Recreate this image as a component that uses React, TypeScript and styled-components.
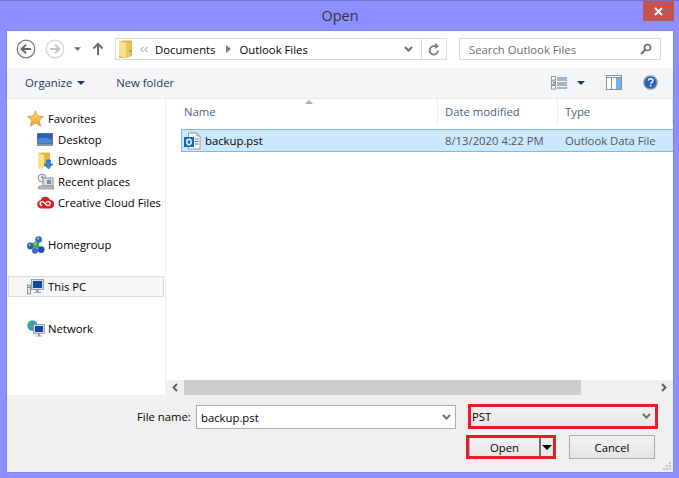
import React from 'react';
import styled, { createGlobalStyle } from 'styled-components';

const GlobalStyle = createGlobalStyle`
  html, body {
    margin: 0;
    padding: 0;
    background: #8c8fff;
  }
  * {
    box-sizing: border-box;
  }
`;

const UI_FONT = `"Open Sans", "Noto Sans", sans-serif`;

const Window = styled.div`
  background: #8c8fff;
  border-top: 1px solid #7070d0;
  color: #000;
  display: flex;
  flex-direction: column;
  font-family: ${UI_FONT};
  font-size: 11.3px;
  height: 478px;
  overflow: hidden;
  width: 679px;
`;

const TitleBar = styled.div`
  align-items: center;
  color: #333;
  display: flex;
  flex: 0 0 30px;
  font-size: 14.5px;
  justify-content: center;
  padding: 0 0 2px 1px;
  position: relative;
`;

const CloseButton = styled.div`
  align-items: center;
  background: #c75050;
  display: flex;
  height: 20px;
  justify-content: center;
  position: absolute;
  right: 5px;
  top: 0;
  width: 31px;
`;

const Content = styled.div`
  background: #fff;
  box-shadow: 0 0 0 1px #8082ea;
  display: flex;
  flex-direction: column;
  height: 441px;
  margin-left: 7px;
  width: 666px;
`;

const Toolbar = styled.div`
  align-items: center;
  display: flex;
  flex: 0 0 37px;
  padding: 0 12px 1px 9px;
`;

const NavIcons = styled.div`
  align-items: center;
  display: flex;
  flex: 0 0 99px;
`;

const AddressBar = styled.div`
  align-items: center;
  border: 1px solid #d9d9d9;
  display: flex;
  height: 22px;
  width: 332px;
`;

const FolderSlot = styled.div`
  align-items: center;
  display: flex;
  padding-left: 3px;
  width: 24px;
`;

const Crumbs = styled.div`
  align-items: center;
  display: flex;
  flex: 1;
  gap: 7px;
`;

const CrumbArrow = styled.svg`
  margin: 0 1px 0 4px;
`;

const AddressEnd = styled.div<{ $width: number }>`
  align-items: center;
  border-left: 1px solid #d9d9d9;
  display: flex;
  height: 100%;
  justify-content: center;
  width: ${(props) => props.$width}px;
`;

const AddressChevron = styled.div`
  align-items: center;
  display: flex;
  height: 100%;
  justify-content: center;
  width: 25px;
`;

const SearchBox = styled.div`
  align-items: center;
  border: 1px solid #d9d9d9;
  color: #6d6d6d;
  display: flex;
  height: 22px;
  justify-content: space-between;
  margin-left: 12px;
  padding: 0 8px 0 9px;
  width: 202px;
`;

const CommandBar = styled.div`
  align-items: center;
  background: #f4f5f7;
  border-bottom: 1px solid #e8e9eb;
  color: #1e395b;
  display: flex;
  flex: 0 0 31px;
  justify-content: space-between;
  padding: 0 15px 1px 18px;
`;

const CommandGroup = styled.div<{ $gap: number }>`
  align-items: center;
  display: flex;
  gap: ${(props) => props.$gap}px;
`;

const Organize = styled.div`
  align-items: center;
  display: flex;
  gap: 5px;
`;

const Main = styled.div`
  display: flex;
  flex: 0 0 296px;
`;

const Sidebar = styled.div`
  border-right: 1px solid #f0f0f0;
  display: flex;
  flex: 0 0 159px;
  flex-direction: column;
  padding: 9px 0 0 1px;
`;

const NavGroup = styled.div`
  display: flex;
  flex-direction: column;
  margin-bottom: 21px;
`;

const NavItem = styled.div<{ $child?: boolean; $selected?: boolean }>`
  align-items: center;
  background: ${(props) => (props.$selected ? '#f6f6f6' : 'transparent')};
  border: 1px solid ${(props) => (props.$selected ? '#dcdcdc' : 'transparent')};
  display: flex;
  gap: 3px;
  height: 21px;
  padding-left: ${(props) => (props.$child ? 28 : 18)}px;
  white-space: nowrap;
  width: 156px;
`;

const NavIcon = styled.span`
  display: inline-flex;
  flex: 0 0 18px;
`;

const ListPane = styled.div`
  display: flex;
  flex: 1;
  flex-direction: column;
  min-width: 0;
`;

const ListBody = styled.div`
  flex: 1;
  overflow: hidden;
`;

const ColumnHeader = styled.div`
  color: #4c607a;
  display: flex;
  height: 26px;
  position: relative;
`;

const Column = styled.div<{ $width: number; $first?: boolean }>`
  align-items: center;
  border-right: 1px solid #ececec;
  display: flex;
  flex: 0 0 ${(props) => props.$width}px;
  height: 100%;
  padding: 0 0 2px ${(props) => (props.$first ? 18 : 7)}px;
`;

const SortArrow = styled.div`
  display: flex;
  left: 139px;
  position: absolute;
  top: 1px;
`;

const FileRow = styled.div`
  align-items: center;
  background: #cce8ff;
  border: 1px solid #7fb8e8;
  border-right: 0;
  display: flex;
  height: 23px;
  margin: 4px 0 0 15px;
`;

const NameCell = styled.div`
  align-items: center;
  display: flex;
  flex: 0 0 258px;
  gap: 3px;
  padding-left: 2px;
`;

const DateCell = styled.div`
  color: #555;
  flex: 0 0 125px;
  padding-left: 5px;
  white-space: nowrap;
`;

const TypeCell = styled.div`
  color: #555;
  white-space: nowrap;
`;

const Scrollbar = styled.div`
  align-items: center;
  background: #f0f0f0;
  display: flex;
  flex: 0 0 15px;
`;

const ScrollArrow = styled.div`
  align-items: center;
  display: flex;
  flex: 0 0 18px;
  height: 100%;
  justify-content: center;
`;

const ScrollTrack = styled.div`
  flex: 1;
  height: 100%;
`;

const ScrollThumb = styled.div`
  background: #cdcdcd;
  height: 100%;
`;

const Footer = styled.div`
  background: #f0f0f0;
  display: flex;
  flex: 0 0 77px;
  flex-direction: column;
  padding-top: 9px;
  position: relative;
`;

const FieldRow = styled.div`
  align-items: flex-end;
  display: flex;
`;

const ButtonRow = styled.div`
  align-items: flex-start;
  display: flex;
  margin-top: 6px;
`;

const FileNameLabel = styled.label`
  align-self: center;
  margin-left: 130px;
  width: 59px;
`;

const FileNameInput = styled.div`
  align-items: center;
  background: #fff;
  border: 1px solid #ababab;
  display: flex;
  height: 24px;
  justify-content: space-between;
  padding: 0 4px 0 4px;
  width: 260px;
`;

const FilterSelect = styled.div`
  align-items: center;
  background: linear-gradient(#f2f2f2, #e5e5e5);
  border: 3px solid #ed1c24;
  display: flex;
  height: 25px;
  justify-content: space-between;
  margin-left: 12px;
  padding: 0 4px 0 1px;
  width: 190px;
`;

const OpenFrame = styled.div`
  background: linear-gradient(#f2f2f2, #e5e5e5);
  border: 3px solid #ed1c24;
  display: flex;
  height: 24px;
  margin-left: 459px;
  width: 90px;
`;

const OpenLabel = styled.div`
  align-items: center;
  border-left: 1px solid #8fb8e0;
  border-right: 2px solid #707070;
  display: flex;
  flex: 1;
  justify-content: center;
`;

const OpenSplit = styled.div`
  align-items: center;
  display: flex;
  flex: 0 0 12px;
  justify-content: center;
`;

const CancelButton = styled.div`
  align-items: center;
  background: linear-gradient(#f2f2f2, #e5e5e5);
  border: 1px solid #acacac;
  display: flex;
  height: 24px;
  justify-content: center;
  margin-left: 13px;
  width: 86px;
`;

const ResizeGrip = styled.svg`
  bottom: 1px;
  position: absolute;
  right: 1px;
`;

const NavCircle = ({ disabled, flip }: { disabled?: boolean; flip?: boolean }) => {
  const color = disabled ? '#d4d4d4' : '#7d7d7d';
  const arrow = disabled ? '#c4c4c4' : '#6a6a6a';
  return (
    <svg width="20" height="20" viewBox="0 0 20 20" style={{ marginRight: 9 }}>
      <circle cx="10" cy="10" r="8.8" fill="#fff" stroke={color} strokeWidth="1.2" />
      <path
        d={flip ? 'M5 10h9M10 5.8l4.4 4.2-4.4 4.2' : 'M15 10H6M10 5.8L5.6 10l4.4 4.2'}
        fill="none"
        stroke={arrow}
        strokeWidth="2"
      />
    </svg>
  );
};

const Caret = ({ color = '#6d6d6d', width = 7 }: { color?: string; width?: number }) => (
  <svg width={width} height={Math.ceil(width / 2)} viewBox="0 0 8 4">
    <path d="M0 0h8L4 4z" fill={color} />
  </svg>
);

const Chevron = ({ color = '#6d6d6d' }: { color?: string }) => (
  <svg width="9" height="7" viewBox="0 0 9 7">
    <path d="M1 1l3.5 3.6L8 1" fill="none" stroke={color} strokeWidth="2" />
  </svg>
);

const FolderIcon = () => (
  <svg width="13" height="18" viewBox="0 0 13 18">
    <path d="M0 1l6-.5h6l1 1V16l-7 2H0z" fill="#e2b544" />
    <path d="M0 1l7 2v15l-7-2z" fill="#f8e28e" />
    <path d="M7 3h5v13H7z" fill="#ecc65c" />
    <rect x="10.5" y="10" width="1.5" height="2" fill="#5a9bd8" />
  </svg>
);

const StarIcon = () => (
  <svg width="17" height="17" viewBox="0 0 17 17">
    <defs>
      <linearGradient id="star" x1="0" y1="0" x2="0" y2="1">
        <stop offset="0" stopColor="#ffe27a" />
        <stop offset="1" stopColor="#f79a2c" />
      </linearGradient>
    </defs>
    <path
      d="M8.5.8l2.3 5.3 5.6.5-4.2 3.7 1.3 5.7-5-3-5 3 1.3-5.7L.6 6.6l5.6-.5z"
      fill="url(#star)"
      stroke="#d98b3a"
      strokeWidth="0.8"
    />
  </svg>
);

const DesktopIcon = () => (
  <svg width="16" height="13" viewBox="0 0 16 13">
    <rect x="0.5" y="0.5" width="15" height="10" fill="#2a62bb" stroke="#5b7390" />
    <path d="M1 6q7-3 14 1v3H1z" fill="#4a8ad8" />
    <rect x="0" y="11" width="16" height="2" fill="#8a97a8" />
  </svg>
);

const DownloadsIcon = () => (
  <svg width="18" height="18" viewBox="0 0 18 18">
    <path d="M1 1l5-.5h6l1 1V15H6l-5 2z" fill="#e2b544" />
    <path d="M1 1l6 2v13l-6 1z" fill="#f8e28e" />
    <path d="M9.5 8h4v4H16l-4.5 5L7 12h2.5z" fill="#2a8be0" stroke="#1a66b0" strokeWidth="0.6" />
  </svg>
);

const RecentIcon = () => (
  <svg width="18" height="18" viewBox="0 0 18 18">
    <circle cx="5" cy="5" r="4" fill="#eef1f4" stroke="#8b8b8b" />
    <path d="M5 2.5V5h2" fill="none" stroke="#555" />
    <rect x="6" y="5" width="10" height="8" fill="#d8dde2" stroke="#8b8f94" />
    <rect x="10" y="7" width="4" height="4" fill="#5b8fd0" />
    <path d="M2 13h14l1 3H1z" fill="#b6bbc0" stroke="#7b7f84" strokeWidth="0.6" />
  </svg>
);

const CreativeCloudIcon = () => (
  <svg width="17" height="15" viewBox="0 0 17 15">
    <path
      d="M4.2 13.5a4.2 4.2 0 0 1-.6-8.3 5 5 0 0 1 9.4-.5 4.4 4.4 0 0 1-.3 8.8z"
      fill="#da1f26"
    />
    <path
      d="M5.2 10.6a2 2 0 0 1 0-4c2 0 3.6 4 5.8 4a2 2 0 0 0 .4-4c-1-.1-1.8.5-2.5 1.2"
      fill="none"
      stroke="#fff"
      strokeWidth="1.4"
    />
  </svg>
);

const HomegroupIcon = () => (
  <svg width="18" height="18" viewBox="0 0 18 18">
    <path d="M9 9L3.5 10M9 9l3-5.5M9 9l5 4.5M9 9l-1.5 6" stroke="#6c96d2" strokeWidth="2.4" />
    <circle cx="3.4" cy="10" r="3.4" fill="#2c5fb8" />
    <circle cx="11.6" cy="3.6" r="3.4" fill="#3668c0" />
    <circle cx="14.2" cy="13.6" r="3.4" fill="#2450a8" />
    <circle cx="8" cy="14.8" r="3" fill="#3a6cc6" />
    <circle cx="9" cy="9" r="3.2" fill="#43a648" />
    <circle cx="11" cy="2.6" r="1.1" fill="#9dbbe8" />
    <circle cx="2.6" cy="9" r="1.1" fill="#9dbbe8" />
    <circle cx="8.4" cy="8" r="1.1" fill="#a8dca8" />
  </svg>
);

const ThisPcIcon = () => (
  <svg width="17" height="16" viewBox="0 0 17 16">
    <rect x="0.5" y="6" width="3" height="9" fill="#e2e4e6" stroke="#7d8288" strokeWidth="0.8" />
    <rect x="1" y="8" width="2" height="1" fill="#43a648" />
    <rect x="4.5" y="0.5" width="12" height="10" fill="#d5dbe2" stroke="#7d8a98" strokeWidth="0.8" />
    <rect x="6" y="2" width="9" height="7" fill="#1446a8" />
    <path d="M9 11h3v2h2v1H7v-1h2z" fill="#9aa2aa" />
  </svg>
);

const NetworkIcon = () => (
  <svg width="18" height="18" viewBox="0 0 18 18">
    <circle cx="5.5" cy="5.5" r="5.2" fill="#2f9adf" />
    <path d="M1.5 2.5q3-2.2 5.5 0t-2 3-1 4q-3.5-2-2.5-7z" fill="#3fae4f" />
    <rect x="6.5" y="4.5" width="11" height="9" fill="#d5dbe2" stroke="#7d8a98" strokeWidth="0.7" />
    <rect x="8" y="6" width="8" height="6" fill="#1446a8" />
    <path d="M11 13.5h2v2h2v1H9v-1h2z" fill="#9aa2aa" />
  </svg>
);

const OutlookIcon = () => (
  <svg width="18" height="18" viewBox="0 0 18 18">
    <path d="M4.5 1H13l3 3v13H4.5z" fill="#fff" stroke="#8d99a6" />
    <path d="M13 1v3h3" fill="#e4e8ec" stroke="#8d99a6" />
    <path d="M11 7h3.5M11 9.5h3.5M11 12h3.5" stroke="#2272c9" />
    <rect x="0" y="5" width="10" height="10" fill="#0b6cc4" />
    <ellipse cx="5" cy="10" rx="2.2" ry="2.7" fill="none" stroke="#fff" strokeWidth="1.4" />
  </svg>
);

const App: React.FC = () => (
  <>
    <GlobalStyle />
    <Window>
      <TitleBar>
        Open
        <CloseButton>
          <svg width="9" height="9" viewBox="0 0 9 9">
            <path d="M1 1l7 7M8 1L1 8" stroke="#fff" strokeWidth="2" />
          </svg>
        </CloseButton>
      </TitleBar>
      <Content>
        <Toolbar>
          <NavIcons>
            <NavCircle />
            <NavCircle disabled flip />
            <Caret />
            <svg width="12" height="14" viewBox="0 0 12 14" style={{ marginLeft: 11 }}>
              <path d="M6 13V2M1.5 6.5L6 2l4.5 4.5" fill="none" stroke="#6d6d6d" strokeWidth="2" />
            </svg>
          </NavIcons>
          <AddressBar>
            <FolderSlot>
              <FolderIcon />
            </FolderSlot>
            <Crumbs>
              <svg width="8" height="7" viewBox="0 0 8 7">
                <path d="M3.5 1L1 3.5 3.5 6M7.5 1L5 3.5 7.5 6" fill="none" stroke="#8a8a8a" />
              </svg>
              <span>Documents</span>
              <CrumbArrow width="5" height="8" viewBox="0 0 5 8">
                <path d="M0 0l5 4-5 4z" fill="#7a7a7a" />
              </CrumbArrow>
              <span>Outlook Files</span>
            </Crumbs>
            <AddressChevron>
              <Chevron />
            </AddressChevron>
            <AddressEnd $width={25}>
              <svg width="12" height="13" viewBox="0 0 12 13">
                <path d="M10 7.5A4.2 4.2 0 1 1 6 3.2h2" fill="none" stroke="#7a7a7a" strokeWidth="1.8" />
                <path d="M7 0l4 3.2L7 6z" fill="#7a7a7a" />
              </svg>
            </AddressEnd>
          </AddressBar>
          <SearchBox>
            <span>Search Outlook Files</span>
            <svg width="12" height="12" viewBox="0 0 12 12">
              <circle cx="7.5" cy="4.5" r="3" fill="#fff" stroke="#6d6d6d" strokeWidth="1.6" />
              <path d="M5 7l-4 4" stroke="#6d6d6d" strokeWidth="2" />
            </svg>
          </SearchBox>
        </Toolbar>
        <CommandBar>
          <CommandGroup $gap={31}>
            <Organize>
              <span>Organize</span>
              <Caret color="#1e395b" width={8} />
            </Organize>
            <span>New folder</span>
          </CommandGroup>
          <CommandGroup $gap={10}>
            <svg width="16" height="14" viewBox="0 0 16 14">
              <path d="M6 2h10M6 4h10M6 7h10M6 9h10M6 12h10" stroke="#5a7591" />
              <rect x="0.5" y="0.5" width="4" height="3.5" fill="#fff" stroke="#8a9aad" />
              <rect x="0.5" y="5" width="4" height="3.5" fill="#fff" stroke="#8a9aad" />
              <rect x="2" y="6" width="1.5" height="1.5" fill="#d22" />
              <rect x="0.5" y="9.5" width="4" height="3.5" fill="#fff" stroke="#8a9aad" />
            </svg>
            <Caret color="#1e395b" width={8} />
            <svg width="16" height="15" viewBox="0 0 16 15" style={{ marginLeft: 11 }}>
              <rect x="0.5" y="0.5" width="15" height="14" fill="#fff" stroke="#8a8f96" />
              <path d="M0.5 2.5h15M5.5 2.5v12" stroke="#8a8f96" />
              <rect x="10" y="3" width="5" height="11" fill="#6cb4f2" />
            </svg>
            <svg width="15" height="15" viewBox="0 0 15 15" style={{ marginLeft: 11 }}>
              <circle cx="7.5" cy="7.5" r="6.6" fill="#2a5fb8" stroke="#8b98a8" strokeWidth="1.4" />
              <path
                d="M5.3 5.6c.3-1.3 1.2-1.8 2.4-1.8 1.3 0 2.2.7 2.2 1.8 0 1.7-2.2 1.7-2.2 3.2"
                fill="none"
                stroke="#fff"
                strokeWidth="1.4"
              />
              <rect x="6.8" y="9.8" width="1.6" height="1.6" fill="#fff" />
            </svg>
          </CommandGroup>
        </CommandBar>
        <Main>
          <Sidebar>
            <NavGroup>
              <NavItem>
                <NavIcon>
                  <StarIcon />
                </NavIcon>
                Favorites
              </NavItem>
              <NavItem $child>
                <NavIcon>
                  <DesktopIcon />
                </NavIcon>
                Desktop
              </NavItem>
              <NavItem $child>
                <NavIcon>
                  <DownloadsIcon />
                </NavIcon>
                Downloads
              </NavItem>
              <NavItem $child>
                <NavIcon>
                  <RecentIcon />
                </NavIcon>
                Recent places
              </NavItem>
              <NavItem $child>
                <NavIcon>
                  <CreativeCloudIcon />
                </NavIcon>
                Creative Cloud Files
              </NavItem>
            </NavGroup>
            <NavGroup>
              <NavItem>
                <NavIcon>
                  <HomegroupIcon />
                </NavIcon>
                Homegroup
              </NavItem>
            </NavGroup>
            <NavGroup>
              <NavItem $selected>
                <NavIcon>
                  <ThisPcIcon />
                </NavIcon>
                This PC
              </NavItem>
            </NavGroup>
            <NavGroup>
              <NavItem>
                <NavIcon>
                  <NetworkIcon />
                </NavIcon>
                Network
              </NavItem>
            </NavGroup>
          </Sidebar>
          <ListPane>
            <ListBody>
              <ColumnHeader>
                <Column $width={272} $first>
                  Name
                </Column>
                <Column $width={120}>Date modified</Column>
                <Column $width={115}>Type</Column>
                <SortArrow>
                  <svg width="8" height="4" viewBox="0 0 8 4">
                    <path d="M4 0l4 4H0z" fill="#8fb4d8" />
                  </svg>
                </SortArrow>
              </ColumnHeader>
              <FileRow>
                <NameCell>
                  <OutlookIcon />
                  <span>backup.pst</span>
                </NameCell>
                <DateCell>8/13/2020 4:22 PM</DateCell>
                <TypeCell>Outlook Data File</TypeCell>
              </FileRow>
            </ListBody>
            <Scrollbar>
              <ScrollArrow>
                <svg width="6" height="9" viewBox="0 0 6 9">
                  <path d="M5 1L1.5 4.5 5 8" fill="none" stroke="#606060" strokeWidth="2" />
                </svg>
              </ScrollArrow>
              <ScrollTrack>
                <ScrollThumb style={{ width: 397 }} />
              </ScrollTrack>
              <ScrollArrow>
                <svg width="6" height="9" viewBox="0 0 6 9">
                  <path d="M1 1l3.5 3.5L1 8" fill="none" stroke="#606060" strokeWidth="2" />
                </svg>
              </ScrollArrow>
            </Scrollbar>
          </ListPane>
        </Main>
        <Footer>
          <FieldRow>
            <FileNameLabel>File name:</FileNameLabel>
            <FileNameInput>
              <span>backup.pst</span>
              <Chevron />
            </FileNameInput>
            <FilterSelect>
              <span>PST</span>
              <Chevron />
            </FilterSelect>
          </FieldRow>
          <ButtonRow>
            <OpenFrame>
              <OpenLabel>Open</OpenLabel>
              <OpenSplit>
                <Caret color="#000" width={10} />
              </OpenSplit>
            </OpenFrame>
            <CancelButton>Cancel</CancelButton>
          </ButtonRow>
          <ResizeGrip width="9" height="9" viewBox="0 0 9 9">
            <path d="M6 0h2v2H6zM3 3h2v2H3zM6 3h2v2H6zM0 6h2v2H0zM3 6h2v2H3zM6 6h2v2H6z" fill="#c4c4c4" />
          </ResizeGrip>
        </Footer>
      </Content>
    </Window>
  </>
);

export default App;
